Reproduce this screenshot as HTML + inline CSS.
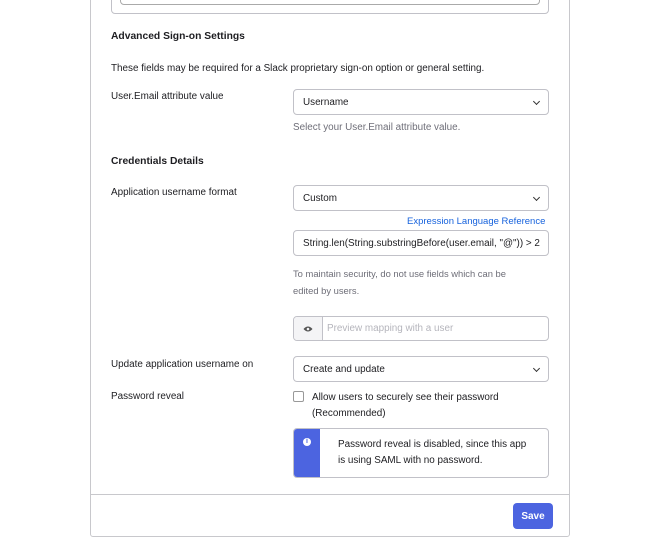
<!DOCTYPE html><html><head><style>
body{margin:0;width:664px;height:552px;background:#fff;font-family:"Liberation Sans",sans-serif;color:#1d1d21;position:relative;overflow:hidden}
.a{position:absolute;font-size:9.9px;white-space:nowrap}
.b{font-weight:bold;font-size:10.3px}
.box{position:absolute;border:1px solid #c1c1c8;border-radius:4px;background:#fff;box-sizing:border-box}
.sel{font-size:9.9px;padding-left:9px;display:flex;align-items:center}
.chev{position:absolute;right:9px;top:50%;margin-top:-3px;width:4px;height:4px;border-right:1.2px solid #333;border-bottom:1.2px solid #333;transform:rotate(45deg)}
.g{color:#6e6e78}
</style></head><body>
<div style="position:absolute;left:90px;top:-5px;width:480px;height:542px;border:1px solid #c8c8cc;border-radius:3px;box-sizing:border-box"></div>
<div style="position:absolute;left:90px;top:494px;width:480px;border-top:1px solid #c8c8cc"></div>
<div class="box" style="left:111px;top:-5px;width:438px;height:19px"></div>
<div class="box" style="left:120px;top:-5px;width:420px;height:10px;border-color:#aaa"></div>
<div class="a b" style="left:111px;top:31px">Advanced Sign-on Settings</div>
<div class="a" style="left:111px;top:63px">These fields may be required for a Slack proprietary sign-on option or general setting.</div>
<div class="a" style="left:111px;top:91px">User.Email attribute value</div>
<div class="box sel" style="left:293px;top:89px;width:256px;height:26px">Username<span class="chev"></span></div>
<div class="a g" style="left:293px;top:122px">Select your User.Email attribute value.</div>
<div class="a b" style="left:111px;top:156px">Credentials Details</div>
<div class="a" style="left:111px;top:187px">Application username format</div>
<div class="box sel" style="left:293px;top:185px;width:256px;height:26px">Custom<span class="chev"></span></div>
<div class="a" style="left:407px;top:216px;color:#1662dd;font-size:9.5px">Expression Language Reference</div>
<div class="box sel" style="left:293px;top:230px;width:256px;height:26px;overflow:hidden">String.len(String.substringBefore(user.email, "@")) &gt; 2</div>
<div class="a g" style="left:293px;top:265px;font-size:9.4px;line-height:17px">To maintain security, do not use fields which can be<br>edited by users.</div>
<div class="box" style="left:293px;top:316px;width:256px;height:25px;overflow:hidden"><div style="position:absolute;left:0;top:0;width:28px;height:100%;background:#f4f4f6;border-right:1px solid #c1c1c8"></div>
<svg style="position:absolute;left:9px;top:8px" width="10" height="8" viewBox="0 0 10 8"><path d="M0.5 4Q5 -1 9.5 4Q5 9 0.5 4Z" fill="#555"/><circle cx="5" cy="4" r="1.3" fill="#f4f4f6"/></svg>
<div class="a" style="left:33px;top:6px;color:#b5b5bc">Preview mapping with a user</div></div>
<div class="a" style="left:111px;top:359px">Update application username on</div>
<div class="box sel" style="left:293px;top:356px;width:256px;height:26px">Create and update<span class="chev"></span></div>
<div class="a" style="left:111px;top:391px">Password reveal</div>
<div class="box" style="left:293px;top:391px;width:11px;height:11px;border-radius:2px;border-color:#999"></div>
<div class="a" style="left:312px;top:390px;line-height:16px">Allow users to securely see their password<br>(Recommended)</div>
<div class="box" style="left:293px;top:428px;width:256px;height:50px;overflow:hidden"><div style="position:absolute;left:0;top:0;width:26px;height:100%;background:#4c64e0"></div>
<div style="position:absolute;left:9px;top:9px;width:8px;height:8px;border-radius:50%;background:#fff;color:#4c64e0;font-size:7px;font-weight:bold;text-align:center;line-height:8px">i</div>
<div class="a" style="left:44px;top:8px;line-height:16px">Password reveal is disabled, since this app<br>is using SAML with no password.</div></div>
<div style="position:absolute;left:513px;top:503px;width:40px;height:26px;background:#4c64e0;border-radius:4px;color:#fff;font-weight:bold;font-size:10px;text-align:center;line-height:28px">Save</div>
</body></html>
